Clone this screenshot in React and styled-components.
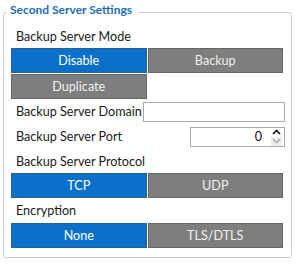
import React from 'react';
import styled, { createGlobalStyle } from 'styled-components';

const Global = createGlobalStyle`
  body {
    margin: 0;
    background: #fff;
    font-family: Lato, "Noto Sans", sans-serif;
  }
`;

const Panel = styled.fieldset`
  box-sizing: border-box;
  width: 289px;
  height: 258px;
  margin: 0 0 0 3px;
  padding: 0 6px 0 7px;
  border: 1px solid #bfcdd8;
  border-radius: 3px;
  min-width: 0;
`;

const Legend = styled.legend`
  margin-left: -4px;
  padding: 2px 7px 6px 3px;
  font-size: 12px;
  line-height: 16px;
  font-weight: 700;
  color: #1c6db6;
`;

const LabelRow = styled.div`
  display: flex;
  align-items: center;
  justify-content: space-between;
  height: ${p => p.h || 24}px;
  padding-left: 5px;
  font-size: 12.6px;
  color: #1a1a1a;
  white-space: nowrap;
`;

const ButtonGrid = styled.div`
  display: grid;
  grid-template-columns: 1fr 1fr;
  gap: 1px;
  margin-right: 2px;
`;

const Toggle = styled.div`
  box-sizing: border-box;
  height: 25px;
  display: flex;
  align-items: center;
  justify-content: center;
  font-size: 12.6px;
  color: ${p => (p.active ? '#ffffff' : '#f0f0f0')};
  background: ${p => (p.active ? '#0a70c9' : '#7e7e7e')};
  border: 1px solid ${p => (p.active ? '#2b5f8e' : '#666666')};
`;

const TextInput = styled.div`
  box-sizing: border-box;
  flex: none;
  width: ${p => p.w}px;
  height: 20px;
  border: 1px solid #a9a9a9;
  background: #fff;
  display: flex;
  align-items: center;
  justify-content: flex-end;
  font-size: 12.6px;
  color: #111;
`;

const Value = styled.span`
  margin-right: 9px;
`;

const Spinner = styled.div`
  display: flex;
  flex-direction: column;
  width: 11px;
  height: 18px;
  margin-right: 2px;
`;

const Arrow = styled.div`
  flex: 1;
  display: flex;
  align-items: center;
  justify-content: center;
  background: ${p => (p.dim ? '#ededed' : 'transparent')};
`;

const ModeOptions = () => (
  <ButtonGrid>
    <Toggle active>Disable</Toggle>
    <Toggle>Backup</Toggle>
    <Toggle>Duplicate</Toggle>
  </ButtonGrid>
);

export default function App() {
  return (
    <>
      <Global />
      <Panel>
        <Legend>Second Server Settings</Legend>
        <LabelRow>Backup Server Mode</LabelRow>
        <ModeOptions />
        <LabelRow h={25}>
          Backup Server Domain
          <TextInput w={142} />
        </LabelRow>
        <LabelRow h={25}>
          Backup Server Port
          <TextInput w={95}>
            <Value>0</Value>
            <Spinner>
              <Arrow>
                <svg width="9" height="6" viewBox="0 0 9 6">
                  <path d="M1 5 L4.5 1.5 L8 5" fill="none" stroke="#111" strokeWidth="1.6" />
                </svg>
              </Arrow>
              <Arrow dim>
                <svg width="9" height="6" viewBox="0 0 9 6">
                  <path d="M1 1 L4.5 4.5 L8 1" fill="none" stroke="#a8a8a8" strokeWidth="1.4" />
                </svg>
              </Arrow>
            </Spinner>
          </TextInput>
        </LabelRow>
        <LabelRow>Backup Server Protocol</LabelRow>
        <ButtonGrid>
          <Toggle active>TCP</Toggle>
          <Toggle>UDP</Toggle>
        </ButtonGrid>
        <LabelRow h={25}>Encryption</LabelRow>
        <ButtonGrid>
          <Toggle active>None</Toggle>
          <Toggle>TLS/DTLS</Toggle>
        </ButtonGrid>
      </Panel>
    </>
  );
}
